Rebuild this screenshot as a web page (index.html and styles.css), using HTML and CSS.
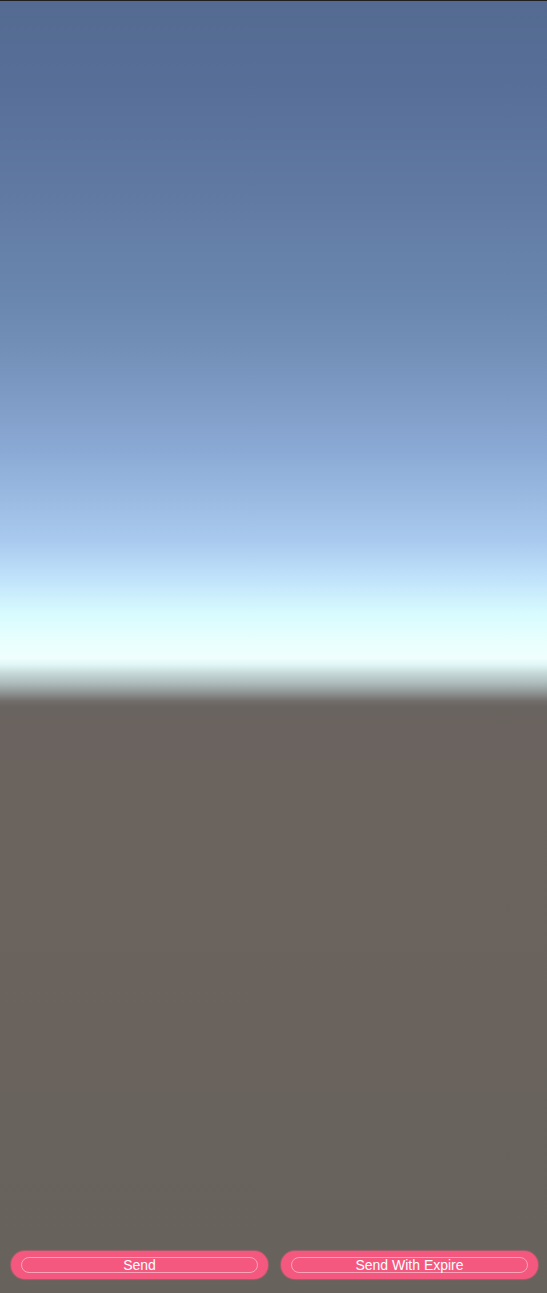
FILE: index.html
```html
<!DOCTYPE html>
<html>
<head>
    <title>Send</title>
    <link rel="stylesheet" href="styles.css">
</head>
<body>
    <div class="scene">
        <div class="sky"></div>
        <div class="actions">
            <button class="pill"><span>Send</span></button>
            <button class="pill"><span>Send With Expire</span></button>
        </div>
    </div>
</body>
</html>
```
FILE: styles.css
```css
html, body {
    margin: 0;
    height: 100%;
}
body {
    font-family: "Liberation Sans", Arial, sans-serif;
    background: #6a635e;
}
.scene {
    height: 100%;
    box-sizing: border-box;
    border-top: 1px solid #202020;
    display: flex;
    flex-direction: column;
    background: linear-gradient(to bottom,
        #546a90 0px,
        #58709a 100px,
        #617aa3 200px,
        #6a87b0 300px,
        #7290b8 350px,
        #7f9cc6 400px,
        #8aa9d4 450px,
        #9cbbe3 500px,
        #a9caee 540px,
        #c2e4fb 580px,
        #d8fcfe 614px,
        #eafffd 642px,
        #effffe 657px,
        #e0f6f6 664px,
        #c4d6d6 673px,
        #aebcbc 682px,
        #8e9292 692px,
        #736e6c 700px,
        #6a6460 706px,
        #6a635e 800px,
        #68625d 100%);
}
.sky { flex: 1; }
.actions {
    display: flex;
    gap: 13px;
    padding: 0 9px 14px 11px;
}
.pill {
    flex: 1;
    height: 28px;
    padding: 6px 10px;
    border: none;
    border-radius: 14px;
    background: #f5587f;
    box-shadow: 0 0 1px 1px rgba(245, 88, 127, 0.45);
    cursor: pointer;
    display: flex;
}
.pill span {
    flex: 1;
    border: 1px solid #f9a3bb;
    border-radius: 8px;
    color: #fff;
    font-family: "Liberation Sans", Arial, sans-serif;
    font-size: 14px;
    line-height: 14px;
    text-align: center;
}
.pill:hover { background: #ee4f77; }
```
